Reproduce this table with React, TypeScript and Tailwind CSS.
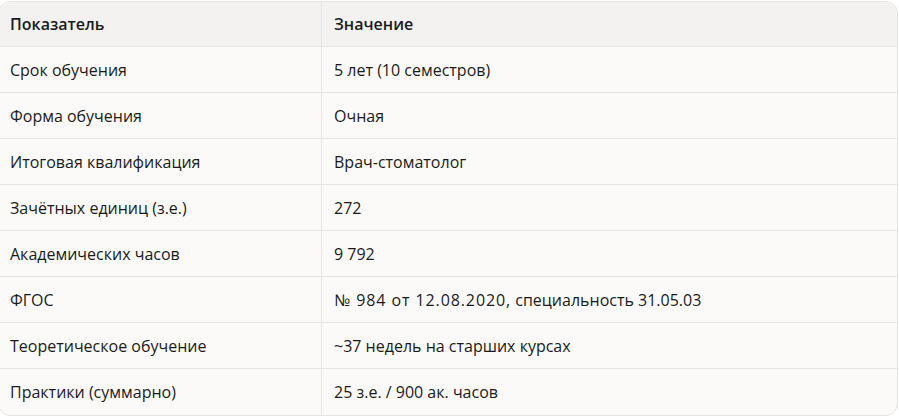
import React from 'react';

const rows: [string, React.ReactNode][] = [
  ['Срок обучения', '5 лет (10 семестров)'],
  ['Форма обучения', 'Очная'],
  ['Итоговая квалификация', 'Врач-стоматолог'],
  ['Зачётных единиц (з.е.)', '272'],
  ['Академических часов', '9 792'],
  [
    'ФГОС',
    <>
      <span className="tracking-[0.9px]">№ 984 от 12.08.2020,</span> специальность 31.05.03
    </>,
  ],
  ['Теоретическое обучение', '~37 недель на старших курсах'],
  ['Практики (суммарно)', '25 з.е. / 900 ак. часов'],
];

const App: React.FC = () => {
  return (
    <div className="w-[899px] h-[416px] bg-white overflow-hidden pt-px" style={{ fontFamily: '"Open Sans", "Noto Sans", sans-serif' }}>
      <div className="-ml-[2px] w-[900px] rounded-[12px] border border-[#e6e4e0] bg-[#fbfaf8] overflow-hidden text-[16px] text-[#1a1a1a]">
        <div className="flex h-[45px] items-center bg-[#f3f2f0] border-b border-[#e6e4e0] font-semibold">
          <div className="w-[323px] h-full flex items-center pl-[11px] border-r border-[#e6e4e0]">Показатель</div>
          <div className="flex-1 pl-[12px]">Значение</div>
        </div>
        {rows.map(([k, v], i) => (
          <div
            key={k}
            className={`flex h-[46px] items-center ${i < rows.length - 1 ? 'border-b border-[#e6e4e0]' : ''}`}
          >
            <div className="w-[323px] h-full flex items-center pl-[11px] border-r border-[#e6e4e0]">{k}</div>
            <div className="flex-1 pl-[12px]">{v}</div>
          </div>
        ))}
      </div>
    </div>
  );
};

export default App;
